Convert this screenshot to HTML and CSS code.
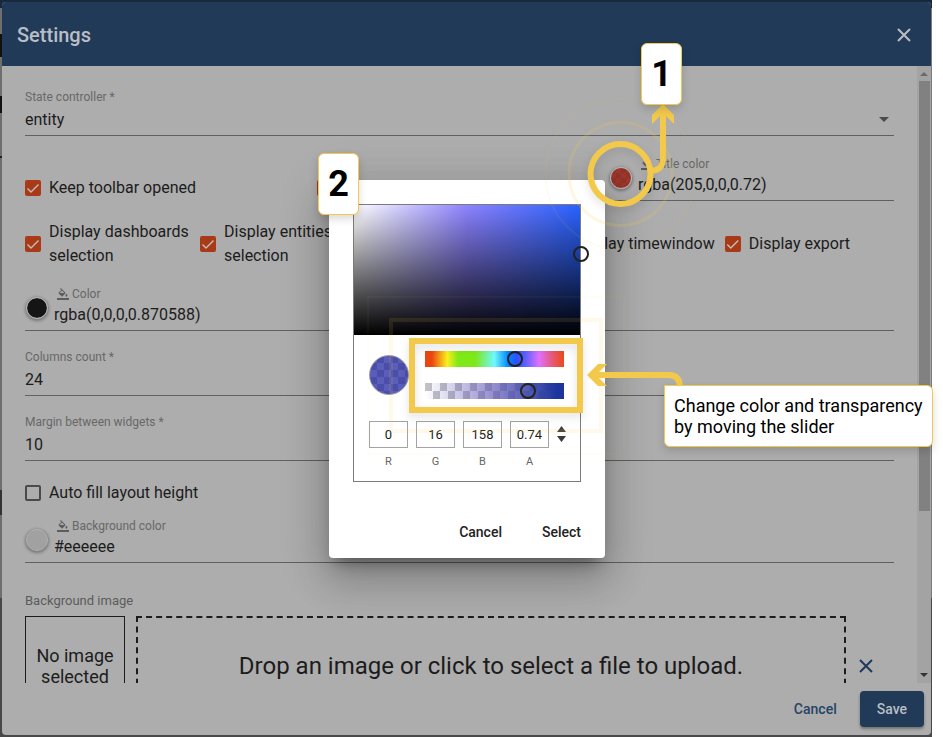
FILE: index.html
```html
<!DOCTYPE html>
<html lang="en">
<head>
<meta charset="utf-8">
<title>Settings</title>
<link rel="stylesheet" href="styles.css">
</head>
<body>
<svg width="0" height="0" class="defs" aria-hidden="true">
  <symbol id="fill" viewBox="0 0 24 24"><path d="M16.56 8.94L7.62 0 6.21 1.41l2.38 2.38-5.15 5.15c-.59.59-.59 1.54 0 2.12l5.5 5.5c.29.29.68.44 1.06.44s.77-.15 1.06-.44l5.5-5.5c.59-.58.59-1.53 0-2.12zM5.21 10L10 5.21 14.79 10H5.21zM19 11.500s-2 2.170-2 3.500c0 1.100.9 2 2 2s2-.9 2-2c0-1.330-2-3.500-2-3.500zM0 20h24v4H0z"/></symbol>
</svg>
<div class="stage">
  <main class="settings">
    <header class="settings-head">
      <h1>Settings</h1>
      <button class="icon-btn" aria-label="Close"><svg width="14" height="14" viewBox="0 0 14 14"><path d="M1 1l12 12M13 1L1 13"/></svg></button>
    </header>
    <div class="settings-body">
      <form class="form">
        <div class="field select-field">
          <label for="state">State controller *</label>
          <select id="state"><option>entity</option></select>
        </div>
        <div class="title-row">
          <label class="check"><input type="checkbox" checked>Keep toolbar opened</label>
          <span class="check"><input type="checkbox" checked aria-label="Display title"></span>
          <div class="field color-field">
            <button type="button" class="swatch red" aria-label="Pick title color"></button>
            <div class="color-text">
              <label for="tcolor"><svg width="12" height="12"><use href="#fill"/></svg>Title color</label>
              <input id="tcolor" type="text" value="rgba(205,0,0,0.72)">
            </div>
          </div>
        </div>
        <div class="display-row">
          <label class="check"><input type="checkbox" checked>Display dashboards selection</label>
          <label class="check"><input type="checkbox" checked>Display entities selection</label>
          <label class="check"><input type="checkbox" checked>Display filters</label>
          <label class="check"><input type="checkbox" checked>Display timewindow</label>
          <label class="check"><input type="checkbox" checked>Display export</label>
        </div>
        <div class="field color-field">
          <button type="button" class="swatch black" aria-label="Pick color"></button>
          <div class="color-text">
            <label for="color"><svg width="12" height="12"><use href="#fill"/></svg>Color</label>
            <input id="color" type="text" value="rgba(0,0,0,0.870588)">
          </div>
        </div>
        <div class="field">
          <label for="cols">Columns count *</label>
          <input id="cols" type="text" value="24">
        </div>
        <div class="field">
          <label for="margin">Margin between widgets *</label>
          <input id="margin" type="text" value="10">
        </div>
        <div class="fill-row">
          <label class="check"><input type="checkbox">Auto fill layout height</label>
        </div>
        <div class="field color-field">
          <button type="button" class="swatch light" aria-label="Pick background color"></button>
          <div class="color-text">
            <label for="bg"><svg width="12" height="12"><use href="#fill"/></svg>Background color</label>
            <input id="bg" type="text" value="#eeeeee">
          </div>
        </div>
        <p class="image-label">Background image</p>
        <div class="image-row">
          <div class="preview">No image selected</div>
          <button type="button" class="drop">Drop an image or click to select a file to upload.</button>
          <button type="button" class="icon-btn clear" aria-label="Remove image"><svg width="14" height="14" viewBox="0 0 14 14"><path d="M1 1l12 12M13 1L1 13"/></svg></button>
        </div>
      </form>
      <div class="scrollbar" aria-hidden="true"><i class="up"></i><i class="thumb"></i><i class="down"></i></div>
    </div>
    <footer class="settings-foot">
      <button class="text-btn">Cancel</button>
      <button class="save-btn">Save</button>
    </footer>
  </main>

  <div class="overlay">
    <section class="modal" aria-label="Color picker">
      <div class="picker">
        <div class="canvas"><i class="cursor"></i></div>
        <div class="mix">
          <span class="current"></span>
          <div class="sliders">
            <input class="hue" type="range" min="0" max="360" value="240" aria-label="Hue">
            <input class="alpha" type="range" min="0" max="100" value="77" aria-label="Transparency">
          </div>
        </div>
        <div class="channels">
          <div><input id="r" type="text" value="0"><label for="r">R</label></div>
          <div><input id="g" type="text" value="16"><label for="g">G</label></div>
          <div><input id="b" type="text" value="158"><label for="b">B</label></div>
          <div><input id="a" type="text" value="0.74"><label for="a">A</label></div>
          <button class="mode" aria-label="Change format"><svg width="9" height="16" viewBox="0 0 9 16"><path d="M4.500 0L9 6H0zM0 10h9l-4.500 6z"/></svg></button>
        </div>
      </div>
      <div class="modal-actions">
        <button>Cancel</button>
        <button>Select</button>
      </div>
    </section>
  </div>

  <svg class="marks" width="943" height="737" viewBox="0 0 943 737" aria-hidden="true">
    <g fill="none" stroke="#f3c94b">
      <g class="glow">
        <circle cx="620.500" cy="174" r="30" stroke-width="6"/>
        <rect x="412" y="341" width="168" height="69" stroke-width="6"/>
      </g>
      <circle cx="620.500" cy="174" r="51.500" stroke-width="3" opacity=".17"/>
      <circle cx="620.500" cy="174" r="75" stroke-width="2" opacity=".07"/>
      <rect x="391" y="320" width="210" height="111" stroke-width="4" opacity=".11"/>
      <rect x="368" y="297" width="256" height="157" stroke-width="2" opacity=".04"/>
      <path d="M652 171C659 170 663 167 663 158V112M680 388C680 380 677 375 669 375H594" stroke-width="6"/>
    </g>
    <path fill="#f3c94b" d="M663 104l11 11v9l-11-11-11 11v-9zM587 375l11-11h9l-11 11 11 11h-9z"/>
  </svg>
  <div class="badge one">1</div>
  <div class="badge two">2</div>
  <p class="callout">Change color and transparency by moving the slider</p>
</div>
</body>
</html>
```
FILE: styles.css
```css
* { box-sizing: border-box; }
body { margin: 0; background: #fff; font-family: Roboto, sans-serif; font-size: 16px; line-height: 24px; color: #1c1c1c; }
button, input, select { font: inherit; color: inherit; background: none; border: 0; padding: 0; margin: 0; outline: 0; border-radius: 0; }
p, h1 { margin: 0; }
.defs { position: absolute; }

.stage {
  position: relative; height: 100vh; margin-right: 11px; padding: 2px 1px 2px 2px;
  background: linear-gradient(#17293d 8px, #6e6e6e 8px 34px, #111 34px 57px, #6e6e6e 57px 96px, #111 96px 113px, #6e6e6e 113px 156px, #222 156px 158px, #6e6e6e 158px 490px, #333 490px 515px, #6e6e6e 515px 598px, #484848 598px) 0 0 / 2px 100% no-repeat, linear-gradient(#17293d 8px, #7c7c7c 8px 598px, #484848 598px);
}
.settings { display: flex; flex-direction: column; height: 100%; border-radius: 4px; overflow: hidden; background: #adadad; }
.settings-head { display: flex; align-items: center; justify-content: space-between; height: 64px; padding: 1px 20px 0 15px; background: #213a58; color: #b9bec4; flex: none; }
.settings-head h1 { font-size: 20px; font-weight: 500; }
.icon-btn { display: flex; stroke: #b9bec4; stroke-width: 2; fill: none; }
.settings-body { display: flex; flex: 1; min-height: 0; overflow: hidden; }
.form { flex: 1; min-width: 0; padding: 5px 23px 0; }

.field { display: flex; flex-direction: column; gap: 3px; height: 65px; justify-content: flex-end; padding-bottom: 3px; border-bottom: 1px solid #606060; }
.field label { font-size: 12px; line-height: 16px; color: #686868; }
.field input[type=text], .field select { width: 100%; height: 24px; display: block; }
.select-field { position: relative; }
.select-field select { appearance: none; }
.select-field::after { content: ""; position: absolute; right: 5px; bottom: 13px; border: 5px solid transparent; border-top-color: #4a4a4a; border-bottom: 0; }
.color-field { flex-direction: row; align-items: flex-end; gap: 6px; height: 58px; }
.color-text { flex: 1; min-width: 0; display: flex; flex-direction: column; gap: 1px; }
.color-text label { display: flex; align-items: center; gap: 3px; padding-left: 3px; }
.color-text svg { fill: #5c5c5c; }
.swatch { width: 22px; height: 22px; margin: 0 0 8px 1px; border-radius: 50%; border: 1px solid #b9b9b9; box-shadow: 0 1px 3px 1px rgba(0,0,0,.3); background-clip: padding-box; }
.red { background: repeating-conic-gradient(#a0372b 0 25%, #923429 0 50%) 0 0 / 10px 10px; }
.black { background-color: #151515; }
.light { background-color: #a1a1a1; border-color: #b4b4b4; }

.check { display: flex; align-items: center; gap: 8px; min-height: 24px; }
.check input { position: relative; appearance: none; flex: none; width: 16px; height: 16px; border: 2px solid #4a4a4a; border-radius: 2px; }
.check input:checked { border: 0; background: #a83a18; }
.check input:checked::before { content: ""; position: absolute; inset: 0; background: #c4bdb9; clip-path: polygon(2px 9px, 3px 8px, 6px 11px, 13px 4px, 14px 5px, 6px 13px); }
.title-row { display: grid; grid-template-columns: 292px 292px 1fr; align-items: end; height: 65px; }
.title-row .check { margin-bottom: 1px; }
.display-row { display: grid; grid-template-columns: 165px 140px 1fr auto auto; column-gap: 10px; padding: 19px 44px 5px 0; }
.fill-row { padding-top: 20px; }
.image-label { padding: 30px 0 7px; font-size: 13px; line-height: 16px; color: #5c5c5c; }
.image-row { display: flex; height: 100px; }
.preview { width: 100px; margin-right: 11px; border: 1px solid #1c1c1c; padding: 0 8px; display: flex; align-items: center; text-align: center; font-size: 18px; line-height: 21px; flex: none; }
.drop { flex: 1; border: 2px dashed #1c1c1c; font-size: 24px; }
.clear { align-self: center; margin: 0 21px 0 13px; stroke: #1f3a5b; }

.scrollbar { display: flex; flex-direction: column; align-items: center; width: 14px; background: #a3a3a3; padding: 6px 0; }
.scrollbar i { border: 4px solid transparent; }
.scrollbar .up { border-top: 0; border-bottom-color: #6a6a6a; }
.scrollbar .down { border-bottom: 0; border-top-color: #333; margin-top: auto; }
.scrollbar .thumb { width: 11px; height: 71%; margin-top: 5px; border: 0; background: #818181; }

.settings-foot { flex: none; display: flex; justify-content: flex-end; align-items: center; gap: 7px; height: 52px; padding: 0 7px 0 0; font-size: 14px; font-weight: 500; }
.text-btn { height: 36px; padding: 0 16px; color: #264467; }
.save-btn { height: 36px; padding: 0 17px; border-radius: 4px; background: #213a58; color: #b9bec4; box-shadow: 0 2px 3px rgba(0,0,0,.35); }

.overlay { position: absolute; inset: 0; padding-left: 2px; display: flex; align-items: center; justify-content: center; }
.modal { width: 276px; padding: 24px 24px 0; border-radius: 4px; background: #fff; box-shadow: 0 11px 15px -7px rgba(0,0,0,.4), 0 24px 38px 3px rgba(0,0,0,.14), 0 9px 46px 8px rgba(0,0,0,.14); }
.picker { height: 278px; border: 1px solid #7b7b7b; }
.canvas { position: relative; height: 130px; background: linear-gradient(transparent, #000), linear-gradient(90deg, #fff, #8d83ff 50%, #2962ff); }
.cursor { position: absolute; right: -9px; top: 41px; width: 16px; height: 16px; border: 2px solid #222; border-radius: 50%; }
.mix { display: flex; align-items: center; gap: 16px; padding: 16px 16px 0 15px; }
.current { width: 40px; height: 40px; border: 1px solid #9a9aa8; border-radius: 50%; background: repeating-conic-gradient(#4a4ea8 0 25%, #5a5dba 0 50%) 0 0 / 14px 14px; flex: none; }
.sliders { flex: 1; display: flex; flex-direction: column; gap: 16px; min-width: 0; }
.sliders input { appearance: none; width: 100%; height: 16px; display: block; }
.sliders input::-webkit-slider-thumb { appearance: none; width: 16px; height: 16px; border: 2px solid #222; border-radius: 50%; background: transparent; }
.hue { background: linear-gradient(90deg, #ec4610 5%, #f9f01c 16%, #7fe817 24%, #7fe817 36%, #6ff8ff 50%, #0084ff 60%, #2c50ff 66%, #5a60ff 72%, #e070ff 82%, #e65a80 91%, #ec4a20 99%); }
.alpha { background: linear-gradient(90deg, rgba(28,50,160,0), #5b52b5b0 52%, #1c349e 95%), repeating-conic-gradient(#fff 0 25%, #c4c4c4 0 50%) 0 0 / 15px 16px; }
.channels { display: grid; grid-template-columns: repeat(4, 39px) auto; gap: 8px; justify-content: start; padding: 22px 15px 0; }
.channels div { display: flex; flex-direction: column; align-items: center; }
.channels input { width: 39px; height: 27px; border: 1px solid #a3a3a3; text-align: center; font-size: 13px; }
.channels label { font-size: 11px; line-height: 14px; margin-top: 7px; color: #666; }
.mode { height: 27px; display: flex; align-items: center; fill: #3c3c3c; }
.modal-actions { display: flex; justify-content: flex-end; gap: 8px; margin-right: -16px; padding: 32px 0 8px; }
.modal-actions button { height: 36px; padding: 0 16px; font-size: 14px; font-weight: 500; color: #222; }

.marks { position: absolute; left: 0; top: 0; }
.glow { filter: drop-shadow(0 4px 4px rgba(0,0,0,.12)); }
.badge, .callout { position: absolute; background: #fff; border: 1px solid #f3c94b; color: #000; box-shadow: 0 4px 8px rgba(0,0,0,.15); }
.badge { width: 41px; height: 62px; border-radius: 6px; font-size: 36px; line-height: 60px; font-weight: 700; text-align: center; }
.one { left: 641px; top: 43px; }
.two { left: 318px; top: 153px; }
.callout { left: 664px; top: 385px; width: 269px; padding: 9px 9px; border-radius: 0 6px 6px 6px; font-size: 18px; line-height: 21px; }
```
